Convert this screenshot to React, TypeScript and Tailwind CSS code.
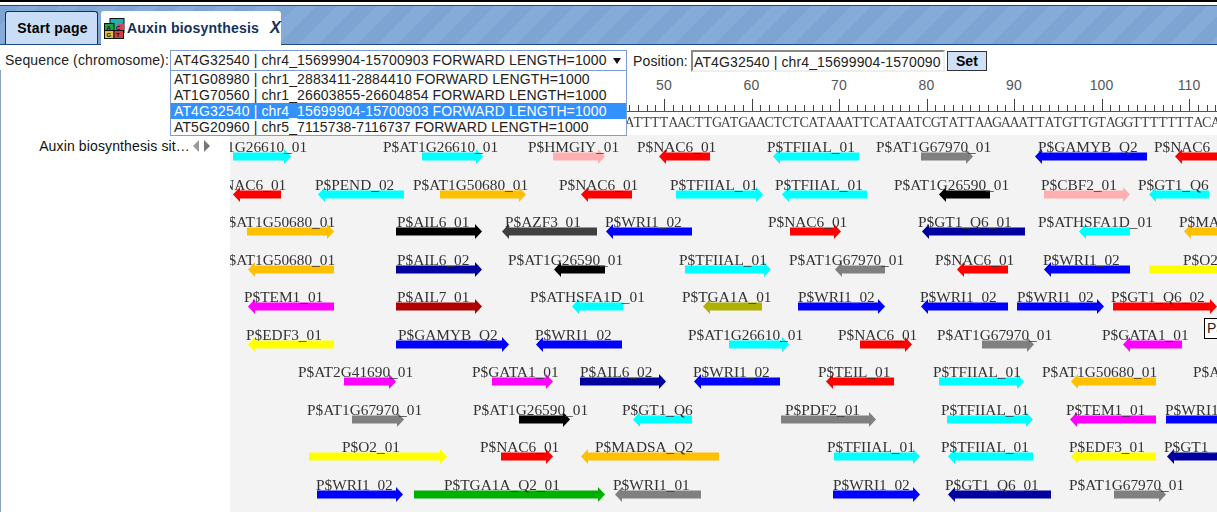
type Feature = { l: string; x: number; a: number; b: number; d: "l" | "r"; c: string };

const CYAN = "#00ffff";
const RED = "#ff0000";
const PINK = "#ffafaf";
const GRAY = "#808080";
const BLUE = "#0000ff";
const NAVY = "#00009f";
const ORANGE = "#ffc000";
const BLACK = "#000000";
const MAGENTA = "#ff00ff";
const YELLOW = "#ffff00";

const f = (l: string, x: number, a: number, b: number, d: "l" | "r", c: string): Feature => ({ l, x, a, b, d, c });

const ROWS: Feature[][] = [
  [
    f("P$AT1G26610_01", 192, 233, 291, "r", CYAN),
    f("P$AT1G26610_01", 383, 422, 483, "r", CYAN),
    f("P$HMGIY_01", 528, 553, 605, "r", PINK),
    f("P$NAC6_01", 637, 659, 710, "l", RED),
    f("P$TFIIAL_01", 767, 773, 859, "l", CYAN),
    f("P$AT1G67970_01", 876, 921, 973, "r", GRAY),
    f("P$GAMYB_Q2", 1038, 1035, 1147, "l", BLUE),
    f("P$NAC6", 1154, 1175, 1240, "l", RED),
  ],
  [
    f("P$NAC6_01", 207, 233, 281, "l", RED),
    f("P$PEND_02", 315, 318, 404, "l", CYAN),
    f("P$AT1G50680_01", 413, 440, 526, "r", ORANGE),
    f("P$NAC6_01", 559, 581, 632, "l", RED),
    f("P$TFIIAL_01", 670, 676, 763, "r", CYAN),
    f("P$TFIIAL_01", 775, 782, 867, "l", CYAN),
    f("P$AT1G26590_01", 894, 939, 990, "l", BLACK),
    f("P$CBF2_01", 1041, 1044, 1130, "r", PINK),
    f("P$GT1_Q6", 1138, 1149, 1209, "l", CYAN),
  ],
  [
    f("P$AT1G50680_01", 220, 247, 334, "r", ORANGE),
    f("P$AIL6_01", 397, 396, 482, "r", BLACK),
    f("P$AZF3_01", 505, 502, 597, "l", "#404040"),
    f("P$WRI1_02", 605, 606, 692, "l", BLUE),
    f("P$NAC6_01", 768, 790, 841, "r", RED),
    f("P$GT1_Q6_01", 918, 922, 1025, "l", NAVY),
    f("P$ATHSFA1D_01", 1038, 1079, 1130, "l", CYAN),
    f("P$MA", 1179, 1184, 1300, "l", ORANGE),
  ],
  [
    f("P$AT1G50680_01", 220, 248, 334, "l", ORANGE),
    f("P$AIL6_02", 397, 396, 482, "r", NAVY),
    f("P$AT1G26590_01", 508, 554, 605, "l", BLACK),
    f("P$TFIIAL_01", 679, 685, 771, "r", CYAN),
    f("P$AT1G67970_01", 789, 835, 885, "l", GRAY),
    f("P$NAC6_01", 935, 957, 1008, "l", RED),
    f("P$WRI1_02", 1043, 1044, 1130, "l", BLUE),
    f("P$O2", 1183, 1149, 1290, "r", YELLOW),
  ],
  [
    f("P$TEM1_01", 244, 248, 334, "l", MAGENTA),
    f("P$AIL7_01", 397, 396, 482, "r", "#b00000"),
    f("P$ATHSFA1D_01", 530, 572, 623, "l", CYAN),
    f("P$TGA1A_01", 682, 703, 762, "l", "#b0b000"),
    f("P$WRI1_02", 798, 798, 885, "r", BLUE),
    f("P$WRI1_02", 920, 921, 1008, "l", BLUE),
    f("P$WRI1_02", 1017, 1017, 1104, "r", BLUE),
    f("P$GT1_Q6_02", 1111, 1113, 1217, "r", RED),
  ],
  [
    f("P$EDF3_01", 246, 248, 334, "l", YELLOW),
    f("P$GAMYB_Q2", 398, 396, 509, "r", BLUE),
    f("P$WRI1_02", 535, 536, 622, "l", BLUE),
    f("P$AT1G26610_01", 688, 729, 789, "r", CYAN),
    f("P$NAC6_01", 838, 860, 912, "r", RED),
    f("P$AT1G67970_01", 937, 982, 1034, "r", GRAY),
    f("P$GATA1_01", 1102, 1123, 1182, "l", MAGENTA),
  ],
  [
    f("P$AT2G41690_01", 298, 344, 396, "r", MAGENTA),
    f("P$GATA1_01", 472, 492, 553, "r", MAGENTA),
    f("P$AIL6_02", 580, 580, 666, "r", NAVY),
    f("P$WRI1_02", 693, 694, 780, "l", BLUE),
    f("P$TEIL_01", 818, 826, 894, "l", RED),
    f("P$TFIIAL_01", 933, 939, 1024, "r", CYAN),
    f("P$AT1G50680_01", 1042, 1071, 1156, "l", ORANGE),
    f("P$A", 1193, 1300, 1310, "l", ORANGE),
  ],
  [
    f("P$AT1G67970_01", 307, 352, 404, "r", GRAY),
    f("P$AT1G26590_01", 473, 519, 570, "r", BLACK),
    f("P$GT1_Q6", 622, 633, 692, "l", CYAN),
    f("P$PDF2_01", 785, 781, 876, "r", GRAY),
    f("P$TFIIAL_01", 941, 947, 1033, "r", CYAN),
    f("P$TEM1_01", 1066, 1070, 1156, "l", MAGENTA),
    f("P$WRI1", 1165, 1166, 1290, "r", BLUE),
  ],
  [
    f("P$O2_01", 342, 309, 447, "r", YELLOW),
    f("P$NAC6_01", 480, 501, 553, "r", RED),
    f("P$MADSA_Q2", 595, 581, 719, "l", ORANGE),
    f("P$TFIIAL_01", 827, 834, 920, "r", CYAN),
    f("P$TFIIAL_01", 941, 948, 1033, "l", CYAN),
    f("P$EDF3_01", 1069, 1071, 1156, "l", YELLOW),
    f("P$GT1_", 1164, 1167, 1290, "l", NAVY),
  ],
  [
    f("P$WRI1_02", 316, 317, 403, "r", BLUE),
    f("P$TGA1A_Q2_01", 444, 414, 605, "r", "#00b000"),
    f("P$WRI1_01", 613, 615, 701, "l", GRAY),
    f("P$WRI1_02", 833, 833, 920, "r", BLUE),
    f("P$GT1_Q6_01", 945, 948, 1051, "l", NAVY),
    f("P$AT1G67970_01", 1069, 1114, 1166, "r", GRAY),
  ],
];

const OPTIONS = [
  "AT1G08980 | chr1_2883411-2884410 FORWARD LENGTH=1000",
  "AT1G70560 | chr1_26603855-26604854 FORWARD LENGTH=1000",
  "AT4G32540 | chr4_15699904-15700903 FORWARD LENGTH=1000",
  "AT5G20960 | chr5_7115738-7116737 FORWARD LENGTH=1000",
];

const SEQ = "ATTTTAACTTGATGAACTCTCATAAATTCATAATCGTATTAAGAAATTATGTTGTAGGTTTTTTTACA";
const CANVAS_LEFT = 230;
const TICKS = Array.from({ length: 68 }, (_, i) => i);

function Arrow({ a, b, d, c }: Pick<Feature, "a" | "b" | "d" | "c">) {
  const w = b - a;
  const pts =
    d === "r"
      ? `0,3.5 ${w - 7},3.5 ${w - 7},0 ${w},7.5 ${w - 7},15 ${w - 7},11.5 0,11.5`
      : `${w},3.5 7,3.5 7,0 0,7.5 7,15 7,11.5 ${w},11.5`;
  return (
    <svg className="absolute top-[11px]" style={{ left: a - CANVAS_LEFT }} width={w} height={15}>
      <polygon points={pts} fill={c} />
    </svg>
  );
}

function TrackRow({ items }: { items: Feature[] }) {
  return (
    <div className="relative h-[37.55px]">
      {items.map((it, i) => (
        <div key={i}>
          <Arrow a={it.a} b={it.b} d={it.d} c={it.c} />
          <span
            className="absolute top-0 whitespace-nowrap font-['Liberation_Serif',serif] text-[15.35px] leading-[18px] tracking-normal text-[#333] blur-[0.3px]"
            style={{ left: it.x - CANVAS_LEFT }}
          >
            {it.l}
          </span>
        </div>
      ))}
    </div>
  );
}

function Ruler() {
  return (
    <div className="relative h-[65px]">
      <svg width={987} height={42} className="block">
        {[50, 60, 70, 80, 90, 100, 110].map((n) => (
          <text key={n} x={434 + (n - 50) * 8.75} y={20} textAnchor="middle" fontSize={14} fill="#555" fontFamily="Liberation Sans, sans-serif">
            {n}
          </text>
        ))}
        <rect x={394} y={41} width={593} height={1} fill="#555" />
        {TICKS.map((i) => {
          const x = Math.round(399 + i * 8.75);
          const major = (i - 4) % 10 === 0;
          return <rect key={i} x={x} y={major ? 29 : 35} width={1} height={major ? 12 : 6} fill="#444" />;
        })}
      </svg>
      <div className="ml-[394.6px] flex pt-[1px] font-['Liberation_Serif',serif] text-[14px] leading-[20px] tracking-normal text-[#444] blur-[0.3px]">
        {SEQ.split("").map((ch, i) => (
          <span key={i} className="w-[8.75px] shrink-0 text-center">
            {ch}
          </span>
        ))}
      </div>
    </div>
  );
}

function AcgtIcon() {
  return (
    <svg width={21} height={21} viewBox="0 0 21 21" className="shrink-0">
      <rect x={6} y={0.5} width={14} height={14} fill="#20b0b0" stroke="#111" />
      <rect x={14} y={6} width={6} height={9} fill="#e04060" />
      <rect x={0.5} y={5.5} width={9.5} height={7.5} fill="#20a040" stroke="#111" />
      <rect x={0.5} y={12.5} width={9.5} height={8} fill="#d8c040" stroke="#111" />
      <rect x={10} y={12.5} width={9.5} height={8} fill="#d04040" stroke="#111" />
      <text x={2.5} y={11.5} fontSize={6} fontWeight={700} fill="#111" fontFamily="Liberation Sans, sans-serif">A</text>
      <text x={12} y={11.5} fontSize={6} fontWeight={700} fill="#111" fontFamily="Liberation Sans, sans-serif">C</text>
      <text x={2.5} y={19} fontSize={6} fontWeight={700} fill="#111" fontFamily="Liberation Sans, sans-serif">G</text>
      <text x={12} y={19} fontSize={6} fontWeight={700} fill="#111" fontFamily="Liberation Sans, sans-serif">T</text>
    </svg>
  );
}

export default function App() {
  return (
    <div className="h-[512px] w-[1217px] overflow-hidden bg-white font-['Liberation_Sans',sans-serif] text-[14px] tracking-[0.13px] text-[#222]">
      {/* Top window edge */}
      <div className="h-[5px] border-t-2 border-t-black bg-white" />

      {/* Tabs */}
      <div className="flex h-[40px] items-end gap-[3px] border-y border-y-[#1f4a7c] bg-[repeating-linear-gradient(135deg,#7da4d2_0,#7da4d2_14px,#85abd9_14px,#85abd9_28px)] pl-[5px]">
        <div className="flex h-[33px] w-[93px] shrink-0 items-center justify-center whitespace-nowrap rounded-t-[3px] border border-b-0 border-[#1b2f4a] bg-[#c9ddf6] pl-[2px] text-[14px] font-bold tracking-[0.2px] text-black">
          Start page
        </div>
        <div className="relative -mb-px flex h-[34px] w-[180px] shrink-0 items-center gap-[2px] whitespace-nowrap rounded-t-[3px] bg-white pl-[3px] text-[14px] font-bold tracking-[0.2px] text-[#12325c]">
          <AcgtIcon />
          <span>Auxin biosynthesis</span>
          <span className="ml-[9px] text-[16px] italic">X</span>
        </div>
      </div>

      {/* Toolbar */}
      <div className="relative z-10 flex h-[25px] items-start pl-[5px] pt-[5px]">
        <span className="w-[165px] shrink-0 whitespace-nowrap leading-[20px]">Sequence (chromosome):</span>
        <div className="relative flex h-[21px] w-[457px] shrink-0 items-center whitespace-nowrap border border-[#7a9fd0] bg-white pl-[3px] text-[14px]">
          AT4G32540 | chr4_15699904-15700903 FORWARD LENGTH=1000
          <svg width={8} height={6} className="absolute right-[5px] top-[7px]">
            <polygon points="0,0 8,0 4,6" fill="#111" />
          </svg>
        </div>
        <span className="ml-[6px] w-[58px] shrink-0 leading-[22px]">Position:</span>
        <div className="h-[22px] w-[254px] shrink-0 overflow-hidden whitespace-nowrap border-2 border-b-[#eee] border-l-[#888] border-r-[#eee] border-t-[#888] pl-[1px] leading-[20px]">
          AT4G32540 | chr4_15699904-1570090
        </div>
        <button className="ml-[2px] mt-px h-[20px] w-[40px] border border-[#333] bg-[#cfe0f7] text-[14px] font-bold leading-[18px] text-black">
          Set
        </button>

        {/* Open dropdown list */}
        <div className="absolute left-[170px] top-[26px] w-[457px] border border-t-0 border-[#7a9fd0] bg-white">
          {OPTIONS.map((o, i) => (
            <div key={o} className={`h-[16px] whitespace-nowrap pl-[3px] leading-[16px] ${i === 2 ? "bg-[#3390ff] text-white" : ""}`}>
              {o}
            </div>
          ))}
        </div>
      </div>

      {/* Track view */}
      <div className="relative flex border-l border-l-[#8aa4c4]">
        <div className="flex w-[229px] shrink-0 items-start justify-end pr-[20px] pt-[67px]">
          <span className="whitespace-nowrap leading-[18px] text-[#111]">Auxin biosynthesis sit…</span>
          <svg width={17} height={12} className="ml-[3px] mt-[3px]">
            <polygon points="6,0 6,12 0,6" fill="#999" />
            <polygon points="11,0 11,12 17,6" fill="#777" />
          </svg>
        </div>
        <div className="w-[987px] shrink-0">
          <Ruler />
          <div className="h-[377px] overflow-hidden bg-[#f3f3f3] pt-[3px]">
            {ROWS.map((items, i) => (
              <TrackRow key={i} items={items} />
            ))}
          </div>
        </div>

        {/* Hover tooltip */}
        <div className="absolute left-[1203px] top-[248px] h-[21px] w-[30px] border border-black bg-white pl-[2px] leading-[19px]">
          P$
        </div>
      </div>
    </div>
  );
}
